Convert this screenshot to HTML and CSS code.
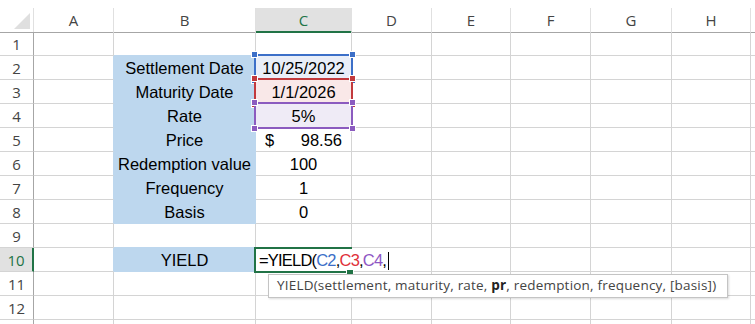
FILE: index.html
```html
<!DOCTYPE html>
<html lang="en">
<head>
    <meta charset="UTF-8">
    <title>YIELD</title>
    <link rel="stylesheet" href="styles.css">
</head>
<body>
<div class="sheet">
    <div class="row head">
        <div class="c corner"><span class="tri"></span></div>
        <div class="c">A</div>
        <div class="c">B</div>
        <div class="c sel">C</div>
        <div class="c">D</div>
        <div class="c">E</div>
        <div class="c">F</div>
        <div class="c">G</div>
        <div class="c">H</div>
        <div class="c"></div>
    </div>
    <div class="row">
        <div class="c num">1</div>
        <div class="c"></div>
        <div class="c eb-b"></div>
        <div class="c"></div>
        <div class="c"></div><div class="c"></div><div class="c"></div><div class="c"></div><div class="c"></div><div class="c"></div>
    </div>
    <div class="row">
        <div class="c num">2</div>
        <div class="c eb"></div>
        <div class="c lbl">Settlement Date</div>
        <div class="c val ref blue-bg">10/25/2022<span class="rng blue"><i class="tl"></i><i class="tr"></i><i class="bl"></i><i class="br"></i></span></div>
        <div class="c"></div><div class="c"></div><div class="c"></div><div class="c"></div><div class="c"></div><div class="c"></div>
    </div>
    <div class="row">
        <div class="c num">3</div>
        <div class="c eb"></div>
        <div class="c lbl">Maturity Date</div>
        <div class="c val ref red-bg">1/1/2026<span class="rng red"><i class="tl"></i><i class="tr"></i><i class="bl"></i><i class="br"></i></span></div>
        <div class="c"></div><div class="c"></div><div class="c"></div><div class="c"></div><div class="c"></div><div class="c"></div>
    </div>
    <div class="row">
        <div class="c num">4</div>
        <div class="c eb"></div>
        <div class="c lbl">Rate</div>
        <div class="c val ref purple-bg">5%<span class="rng purple"><i class="tl"></i><i class="tr"></i><i class="bl"></i><i class="br"></i></span></div>
        <div class="c"></div><div class="c"></div><div class="c"></div><div class="c"></div><div class="c"></div><div class="c"></div>
    </div>
    <div class="row">
        <div class="c num">5</div>
        <div class="c eb"></div>
        <div class="c lbl">Price</div>
        <div class="c money"><span>$</span><span>98.56</span></div>
        <div class="c"></div><div class="c"></div><div class="c"></div><div class="c"></div><div class="c"></div><div class="c"></div>
    </div>
    <div class="row">
        <div class="c num">6</div>
        <div class="c eb"></div>
        <div class="c lbl">Redemption value</div>
        <div class="c val">100</div>
        <div class="c"></div><div class="c"></div><div class="c"></div><div class="c"></div><div class="c"></div><div class="c"></div>
    </div>
    <div class="row">
        <div class="c num">7</div>
        <div class="c eb"></div>
        <div class="c lbl">Frequency</div>
        <div class="c val">1</div>
        <div class="c"></div><div class="c"></div><div class="c"></div><div class="c"></div><div class="c"></div><div class="c"></div>
    </div>
    <div class="row">
        <div class="c num">8</div>
        <div class="c eb"></div>
        <div class="c lbl">Basis</div>
        <div class="c val">0</div>
        <div class="c"></div><div class="c"></div><div class="c"></div><div class="c"></div><div class="c"></div><div class="c"></div>
    </div>
    <div class="row">
        <div class="c num">9</div>
        <div class="c"></div>
        <div class="c eb-b"></div>
        <div class="c"></div>
        <div class="c"></div><div class="c"></div><div class="c"></div><div class="c"></div><div class="c"></div><div class="c"></div>
    </div>
    <div class="row">
        <div class="c num active">10</div>
        <div class="c eb"></div>
        <div class="c lbl">YIELD</div>
        <div class="c edit">
            <span class="act"><i class="fill"></i></span>
            <span class="formula">=YIELD(<span class="t-blue">C2</span>,<span class="t-red">C3</span>,<span class="t-purple">C4</span>,<span class="caret"></span></span>
            <div class="tip">YIELD(settlement, maturity, rate, <b>pr</b>, redemption, frequency, [basis])</div>
        </div>
        <div class="c"></div><div class="c"></div><div class="c"></div><div class="c"></div><div class="c"></div><div class="c"></div>
    </div>
    <div class="row">
        <div class="c num">11</div>
        <div class="c"></div><div class="c"></div><div class="c"></div>
        <div class="c"></div><div class="c"></div><div class="c"></div><div class="c"></div><div class="c"></div><div class="c"></div>
    </div>
    <div class="row">
        <div class="c num">12</div>
        <div class="c"></div><div class="c"></div><div class="c"></div>
        <div class="c"></div><div class="c"></div><div class="c"></div><div class="c"></div><div class="c"></div><div class="c"></div>
    </div>
    <div class="row">
        <div class="c num"></div>
        <div class="c"></div><div class="c"></div><div class="c"></div>
        <div class="c"></div><div class="c"></div><div class="c"></div><div class="c"></div><div class="c"></div><div class="c"></div>
    </div>
</div>
</body>
</html>
```

FILE: styles.css
```css
* {
    padding: 0;
    margin: 0;
    box-sizing: border-box;
}

body {
    background: #fff;
    font-family: "Liberation Sans", Arial, sans-serif;
}

.sheet {
    width: 755px;
    height: 324px;
    overflow: hidden;
    padding-top: 8px;
}

.row {
    display: grid;
    grid-template-columns: 34px 80px 142px 96px 80px 79px 80px 81px 79px 80px;
    height: 24px;
}

.c {
    border-right: 1px solid #d4d4d4;
    border-bottom: 1px solid #d4d4d4;
    font-size: 16.5px;
    line-height: 22px;
    padding-top: 1px;
    color: #000;
    white-space: nowrap;
}

/* column letters */
.head .c {
    font-family: "Open Sans", sans-serif;
    font-size: 15px;
    color: #444;
    text-align: center;
    border-right-color: #e0e0e0;
    border-bottom-color: #a6a6a6;
    padding-top: 1px;
}

.head .sel {
    background: #e1e1e1;
    color: #217346;
    border-bottom: 2px solid #217346;
    border-right-color: #e1e1e1;
}

.corner {
    display: flex;
    justify-content: flex-end;
    align-items: flex-end;
    padding: 0 3px 3px 0 !important;
}

.tri {
    width: 16px;
    height: 16px;
    background: #dfdfdf;
    clip-path: polygon(100% 0, 100% 100%, 0 100%);
}

/* row numbers */
.num {
    font-family: "Open Sans", sans-serif;
    font-size: 15px;
    color: #444;
    text-align: center;
    border-right-color: #a6a6a6;
}

.num.active {
    background: #e1e1e1;
    color: #217346;
    border-right: 2px solid #217346;
}

.eb {
    border-right-color: #bdd7ee;
}

.eb-b {
    border-bottom-color: #bdd7ee;
}

.lbl {
    background: #bdd7ee;
    border-color: #bdd7ee;
    text-align: center;
}

.val {
    text-align: center;
}

.money {
    display: flex;
    justify-content: space-between;
    padding: 1px 9px 0 9px;
}

/* referenced ranges */
.ref {
    position: relative;
}

.blue-bg {
    background: #e9eef8;
}

.red-bg {
    background: #f9e8e8;
}

.purple-bg {
    background: #efebf6;
}

.rng {
    position: absolute;
    top: -2px;
    left: -2px;
    right: -2px;
    bottom: -2px;
    border: 2px solid;
}

.rng i {
    position: absolute;
    width: 5px;
    height: 5px;
    background: currentColor;
    box-shadow: 0 0 0 1px #fff;
}

.rng .tl { left: -4px; top: -4px; }
.rng .tr { right: -4px; top: -4px; }
.rng .bl { left: -4px; bottom: -4px; }
.rng .br { right: -4px; bottom: -4px; }

.blue { color: #3c6fc8; }
.red { color: #c23a3d; }
.purple { color: #8b5bbf; }

/* cell being edited */
.edit {
    position: relative;
    border-right-color: transparent;
    padding-left: 3px;
}

.act {
    position: absolute;
    top: -1px;
    left: -2px;
    right: -1px;
    bottom: -2px;
    border: 2px solid #217346;
    border-right: 0;
}

.act .fill {
    position: absolute;
    right: -1px;
    bottom: -4px;
    width: 6px;
    height: 5px;
    background: #217346;
    box-shadow: 0 0 0 1px #fff;
}

.formula {
    position: relative;
    letter-spacing: -0.8px;
}

.t-blue { color: #3c6fc8; }
.t-red { color: #e0303a; }
.t-purple { color: #8e56c4; }

.caret {
    display: inline-block;
    width: 1px;
    height: 18px;
    background: #000;
    margin-left: 2px;
    vertical-align: -4px;
}

.tip {
    position: absolute;
    left: 12px;
    top: 26px;
    width: 460px;
    height: 24px;
    background: #fff;
    border: 1px solid #c4c4c4;
    box-shadow: 1px 1px 2px rgba(0, 0, 0, 0.15);
    font-family: "Open Sans", sans-serif;
    font-size: 13.5px;
    letter-spacing: 0.2px;
    line-height: 21px;
    color: #444;
    padding-left: 8px;
}

.tip b {
    color: #222;
}
```
